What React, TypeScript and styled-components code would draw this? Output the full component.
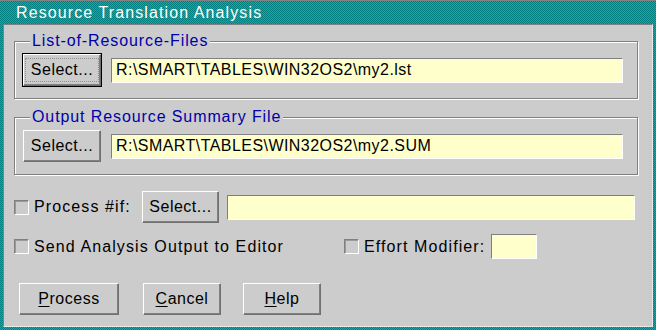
import styled, { createGlobalStyle } from "styled-components";

const GlobalStyle = createGlobalStyle`
  html, body {
    margin: 0;
    padding: 0;
    background: #cccccc;
  }
  body {
    font-family: "Liberation Sans", Arial, sans-serif;
  }
`;

const Frame = styled.div`
  width: 656px;
  height: 330px;
  box-sizing: border-box;
  display: flex;
  flex-direction: column;
  padding: 0 3px 3px 3px;
  border-top: 1px solid #808080;
  background: repeating-conic-gradient(#008080 0% 25%, #4f8f8f 0% 50%) 0 0 / 2px 2px;
`;

const TitleBar = styled.div`
  height: 23px;
  display: flex;
  align-items: center;
  padding-left: 13px;
  color: #ffffff;
  font-size: 16px;
  letter-spacing: 1.1px;
`;

const Client = styled.div`
  flex: 1;
  background: #cccccc;
  border-top: 1px solid #808080;
  border-left: 1px solid #808080;
  border-right: 1px solid #e8e8e8;
  border-bottom: 1px solid #e8e8e8;
  padding: 8px 14px 0 10px;
  display: flex;
  flex-direction: column;
`;

const Group = styled.fieldset`
  margin: 0 0 10px 0;
  min-width: 0;
  padding: 5px 14px 12px 8px;
  border: 1px solid #808080;
  box-shadow: 1px 1px 0 #ffffff, inset 1px 1px 0 #ffffff;
  display: flex;
  align-items: center;
  gap: 10px;
`;

const Legend = styled.legend`
  margin-left: 7px;
  padding: 0 2px 0 2px;
  background: #cccccc;
  color: #0000aa;
  font-size: 16px;
  line-height: 16px;
  letter-spacing: 0.9px;
`;

const Button = styled.button<{ $width: number; $focused?: boolean }>`
  width: ${(p) => p.$width}px;
  height: 32px;
  flex: none;
  box-sizing: border-box;
  padding: 0;
  background: #cccccc;
  border: 1px solid;
  border-color: #ffffff #707070 #707070 #ffffff;
  box-shadow: inset -1px -1px 0 #808080, 0 0 0 ${(p) => (p.$focused ? 1 : 0)}px #000000;
  font-family: "Liberation Sans", Arial, sans-serif;
  font-size: 16px;
  letter-spacing: 0.5px;
  color: #000000;
  display: flex;
  align-items: center;
  justify-content: center;
`;

const FocusRing = styled.span`
  padding: 2px 5px;
  border: 1px dotted #909090;
`;

const Mnemonic = styled.span`
  text-decoration: underline;
  text-underline-offset: 2px;
`;

const Field = styled.div<{ $width?: number }>`
  ${(p) => (p.$width ? `width: ${p.$width}px; flex: none;` : "flex: 1;")}
  height: 25px;
  box-sizing: border-box;
  background: #ffffcc;
  border: 1px solid;
  border-color: #808080 #ffffff #ffffff #808080;
  padding-left: 4px;
  display: flex;
  align-items: center;
  font-size: 16px;
  letter-spacing: 0.45px;
  color: #000000;
  white-space: nowrap;
  overflow: hidden;
`;

const Row = styled.div<{ $top: number }>`
  margin-top: ${(p) => p.$top}px;
  display: flex;
  align-items: center;
`;

const CheckItem = styled.label<{ $width?: number }>`
  display: flex;
  align-items: center;
  gap: 5px;
  ${(p) => (p.$width ? `width: ${p.$width}px; flex: none;` : "")}
  font-size: 16px;
  letter-spacing: 1.1px;
  color: #000000;
`;

const Box = styled.span`
  width: 15px;
  height: 15px;
  box-sizing: border-box;
  flex: none;
  background: #cccccc;
  border: 1px solid;
  border-color: #808080 #ffffff #ffffff #808080;
  box-shadow: inset 1px 1px 0 #9a9a9a;
`;

const ButtonBar = styled.div`
  margin-top: 24px;
  padding-left: 5px;
  display: flex;
  align-items: center;
`;

export default function App() {
  return (
    <>
      <GlobalStyle />
      <Frame>
        <TitleBar>Resource Translation Analysis</TitleBar>
        <Client>
          <Group>
            <Legend>List-of-Resource-Files</Legend>
            <Button $width={78} $focused>
              <FocusRing>Select...</FocusRing>
            </Button>
            <Field>R:\SMART\TABLES\WIN32OS2\my2.lst</Field>
          </Group>
          <Group>
            <Legend>Output Resource Summary File</Legend>
            <Button $width={78}>Select...</Button>
            <Field>R:\SMART\TABLES\WIN32OS2\my2.SUM</Field>
          </Group>
          <Row $top={6}>
            <CheckItem $width={128}>
              <Box />
              Process #if:
            </CheckItem>
            <Button $width={77}>Select...</Button>
            <Field style={{ marginLeft: 8, marginRight: 3 }} />
          </Row>
          <Row $top={11}>
            <CheckItem $width={330}>
              <Box />
              Send Analysis Output to Editor
            </CheckItem>
            <CheckItem>
              <Box />
              Effort Modifier:
            </CheckItem>
            <Field $width={46} style={{ marginLeft: 6 }} />
          </Row>
          <ButtonBar>
            <Button $width={100}>
              <span>
                <Mnemonic>P</Mnemonic>rocess
              </span>
            </Button>
            <Button $width={78} style={{ marginLeft: 24 }}>
              <span>
                <Mnemonic>C</Mnemonic>ancel
              </span>
            </Button>
            <Button $width={78} style={{ marginLeft: 22 }}>
              <span>
                <Mnemonic>H</Mnemonic>elp
              </span>
            </Button>
          </ButtonBar>
        </Client>
      </Frame>
    </>
  );
}
